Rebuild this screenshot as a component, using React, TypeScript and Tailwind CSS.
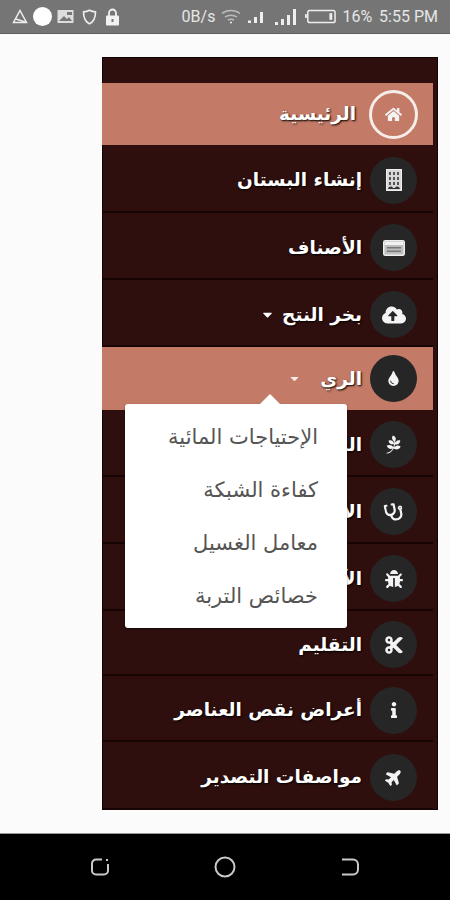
import type { ReactNode } from 'react';
import { FaBug, FaCaretDown, FaCloudUploadAlt, FaCut, FaHome, FaInfo, FaPagelines, FaPlane, FaStethoscope, FaTint } from 'react-icons/fa';

function BuildingIcon() {
  return (
    <svg width="16" height="22" viewBox="0 0 16 22">
      <rect x="0.5" y="0.5" width="15" height="21" fill="#d8d8d8" stroke="#eee" />
      <g fill="#555">
        <rect x="3" y="3" width="2" height="3" />
        <rect x="7" y="3" width="2" height="3" />
        <rect x="11" y="3" width="2" height="3" />
        <rect x="3" y="8" width="2" height="3" />
        <rect x="7" y="8" width="2" height="3" />
        <rect x="11" y="8" width="2" height="3" />
        <rect x="3" y="13" width="2" height="3" />
        <rect x="7" y="13" width="2" height="3" />
        <rect x="11" y="13" width="2" height="3" />
      </g>
      <path d="M2 20c1-3 4-3 5-1h2c1-2 4-2 5 1z" fill="#333" />
    </svg>
  );
}

function CardIcon() {
  return (
    <svg width="22" height="16" viewBox="0 0 22 16">
      <rect x="0.75" y="0.75" width="20.5" height="14.5" rx="1.5" fill="#bdbdbd" stroke="#eee" strokeWidth="1.5" />
      <rect x="2" y="2" width="18" height="3" fill="#f2f2f2" />
      <rect x="4" y="7" width="14" height="1.5" fill="#777" />
      <rect x="4" y="10.5" width="14" height="1.5" fill="#777" />
    </svg>
  );
}

type Item = {
  label: string;
  icon: ReactNode;
  height: string;
  active?: boolean;
  ring?: boolean;
  caret?: 'near' | 'far';
};

const items: Item[] = [
  { label: 'الرئيسية', icon: <FaHome size={17} />, height: 'h-[62px]', active: true, ring: true },
  { label: 'إنشاء البستان', icon: <BuildingIcon />, height: 'h-[68px]' },
  { label: 'الأصناف', icon: <CardIcon />, height: 'h-[67px]' },
  { label: 'بخر النتح', icon: <FaCloudUploadAlt size={24} />, height: 'h-[67px]', caret: 'near' },
  { label: 'الري', icon: <FaTint size={15} />, height: 'h-[63px]', active: true, caret: 'far' },
  { label: 'التسميد', icon: <FaPagelines size={19} />, height: 'h-[67px]' },
  { label: 'الأمراض', icon: <FaStethoscope size={18} className="-rotate-12" />, height: 'h-[67px]' },
  { label: 'الآفات', icon: <FaBug size={18} />, height: 'h-[67px]' },
  { label: 'التقليم', icon: <FaCut size={20} />, height: 'h-[65px]' },
  { label: 'أعراض نقص العناصر', icon: <FaInfo size={16} />, height: 'h-[66px]' },
  { label: 'مواصفات التصدير', icon: <FaPlane size={18} className="-rotate-45" />, height: 'h-[68px]' },
];

const subItems = ['الإحتياجات المائية', 'كفاءة الشبكة', 'معامل الغسيل', 'خصائص التربة'];

function MenuRow({ item }: { item: Item }) {
  return (
    <div
      className={`flex items-center gap-[8px] pr-[16px] ${item.height} ${
        item.active ? 'bg-[#c37a66]' : 'border-b-2 border-[#170505] pt-[4px]'
      }`}
    >
      <span
        className={`flex shrink-0 items-center justify-center rounded-full text-[#f4f4f4] ${
          item.ring
            ? '-mr-[1px] ml-[5px] h-[49px] w-[49px] border-[3px] border-[#f6ece8] bg-[#c37a66]'
            : 'h-[47px] w-[47px] bg-[#262626]'
        }`}
      >
        {item.icon}
      </span>
      <span className="text-[18.5px] font-bold whitespace-nowrap text-white [text-shadow:1px_1px_2px_#000]">{item.label}</span>
      {item.caret === 'near' && <FaCaretDown size={15} className="-mr-[1px] text-white" />}
      {item.caret === 'far' && <FaCaretDown size={13} className="mr-[11px] text-[#f7e9e4]" />}
    </div>
  );
}

function StatusBar() {
  return (
    <div className="flex h-[34px] items-center justify-between border-b border-[#5e5e5e] bg-[#757575] pr-[12px] pl-[12px] text-[#e8e8e8]">
      <div className="flex items-center gap-[5px]">
        <svg width="16" height="15" viewBox="0 0 16 15" fill="none" stroke="#eee" strokeWidth="1.5">
          <path d="M8 1.5 14.5 13.500H1.500Z" />
          <path d="M4 10 13 13" />
        </svg>
        <span className="h-[19px] w-[19px] rounded-full bg-white" />
        <svg width="17" height="15" viewBox="0 0 17 15">
          <rect x="0.5" y="1" width="16" height="13" fill="#ddd" />
          <path d="M2 12l5-5 3 3 2-2 3 4z" fill="#777" />
          <rect x="10" y="3" width="5" height="3" fill="#777" />
        </svg>
        <svg width="15" height="16" viewBox="0 0 15 16" fill="none" stroke="#eee" strokeWidth="1.6" className="ml-[3px]">
          <path d="M7.5 1.2c2 1.2 3.8 1.6 6 1.7 0 5.500-1.500 9.500-6 12-4.500-2.500-6-6.500-6-12 2.200-.1 4-.5 6-1.700Z" />
        </svg>
        <svg width="15" height="18" viewBox="0 0 15 18" className="ml-[3px]">
          <path d="M4 8V5a3.500 3.500 0 0 1 7 0v3" fill="none" stroke="#f2f2f2" strokeWidth="1.800" />
          <rect x="1" y="7.500" width="13" height="10" rx="1" fill="#f2f2f2" />
          <rect x="6.500" y="11" width="2" height="3" fill="#777" />
        </svg>
      </div>
      <div className="flex items-center font-['Roboto',sans-serif] text-[16px] text-[#e6e6e6]">
        <span>0B/s</span>
        <svg width="20" height="15" viewBox="0 0 20 15" fill="none" stroke="#bbb" strokeWidth="1.500" className="ml-[6px]">
          <path d="M1 4.500c5-4 13-4 18 0" />
          <path d="M4 8c3.500-2.500 8.500-2.500 12 0" />
          <path d="M7 11c1.800-1 4.200-1 6 0" />
          <circle cx="10" cy="13.500" r="1" fill="#eee" stroke="none" />
        </svg>
        <svg width="15" height="13" viewBox="0 0 15 13" fill="#eee" className="ml-[7px]">
          <rect x="0" y="10.500" width="3" height="2.500" />
          <rect x="6" y="7" width="3" height="6" />
          <rect x="12" y="2" width="3" height="11" />
        </svg>
        <svg width="21" height="16" viewBox="0 0 21 16" fill="#eee" className="ml-[12px]">
          <rect x="0" y="13" width="3" height="3" />
          <rect x="6" y="10" width="3" height="6" />
          <rect x="12" y="6" width="3" height="10" />
          <rect x="18" y="0" width="3" height="16" />
        </svg>
        <svg width="31" height="15" viewBox="0 0 33 15" className="ml-[9px]">
          <rect x="0" y="5" width="2" height="4" fill="#eee" />
          <rect x="3" y="1" width="29" height="13" rx="2" fill="none" stroke="#eee" strokeWidth="1.600" />
          <rect x="26" y="4" width="3" height="7" fill="#eee" />
        </svg>
        <span className="ml-[6px]">16%</span>
        <span className="ml-[7px]">5:55 PM</span>
      </div>
    </div>
  );
}

export default function App() {
  return (
    <div className="flex h-[900px] w-[450px] flex-col overflow-hidden bg-black font-['DejaVu_Sans',sans-serif]">
      <StatusBar />

      <main className="flex h-[799px] justify-end bg-[#fbfbfb] pt-[23px] pr-[12px]">
        <div dir="rtl" className="relative h-[753px] w-[336px] bg-[#2e0f0d] pt-[26px] pr-[5px] shadow-[inset_0_0_0_1px_#120404]">
          {items.map(item => (
            <MenuRow key={item.label} item={item} />
          ))}

          <div className="absolute top-[347px] right-[91px] w-[222px] rounded-[3px] bg-white pt-[7px] pr-[29px] pb-[5px] text-[#555] shadow-[0_1px_2px_rgba(0,0,0,.5)]">
            <span className="absolute -top-[10px] right-[67px] h-0 w-0 border-x-[10px] border-b-[10px] border-x-transparent border-b-white" />
            {subItems.map(label => (
              <div key={label} className="flex h-[53px] items-center text-[21px] whitespace-nowrap">
                {label}
              </div>
            ))}
          </div>
        </div>
      </main>

      <div className="flex h-[67px] items-center justify-between border-t border-[#999] bg-black px-[90px]">
        <svg width="20" height="20" viewBox="0 0 20 20" fill="none" stroke="#c9c9c9" strokeWidth="2">
          <path d="M12 2.500H6a4 4 0 0 0-4 4v7a4 4 0 0 0 4 4h8a4 4 0 0 0 4-4V7" />
          <path d="M17 2v2" />
        </svg>
        <svg width="22" height="22" viewBox="0 0 22 22" fill="none" stroke="#c9c9c9" strokeWidth="2">
          <circle cx="11" cy="11" r="9.500" />
        </svg>
        <svg width="20" height="20" viewBox="0 0 20 20" fill="none" stroke="#c9c9c9" strokeWidth="2">
          <path d="M2 2.500h11a5 5 0 0 1 5 5v5a5 5 0 0 1-5 5H2" />
        </svg>
      </div>
    </div>
  );
}
